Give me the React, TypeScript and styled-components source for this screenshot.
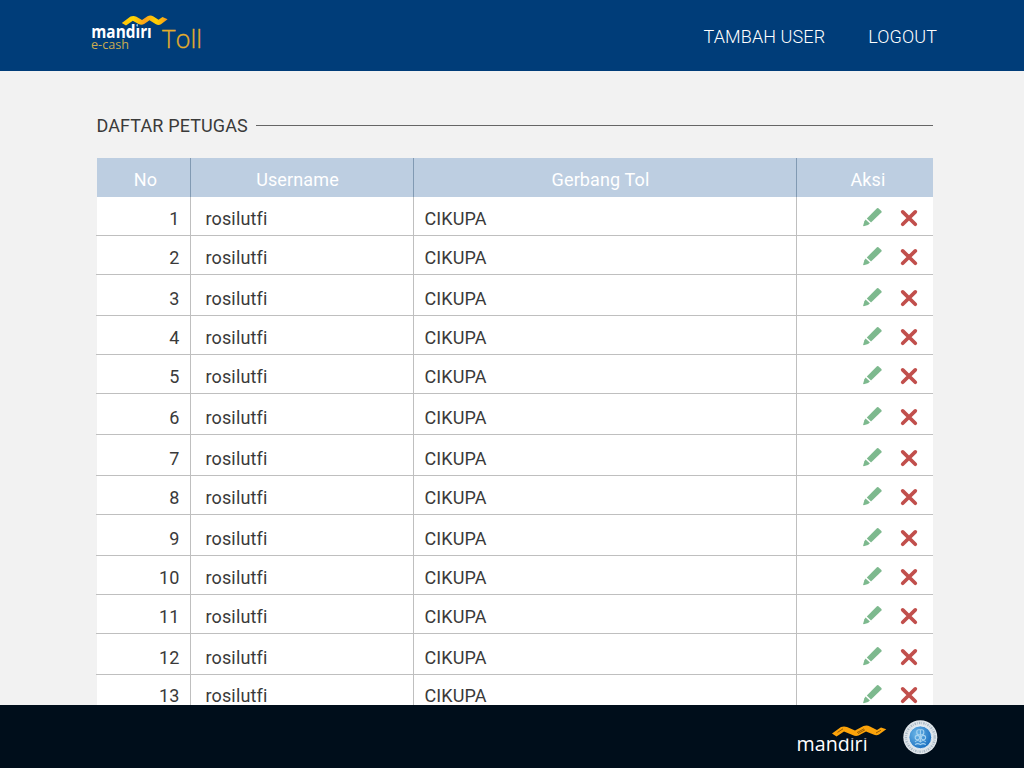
import React from "react";
import styled, { createGlobalStyle } from "styled-components";

const GlobalStyle = createGlobalStyle`
  * { box-sizing: border-box; }
  body { margin: 0; background: #f2f2f2; font-family: Roboto, "Liberation Sans", sans-serif; }
`;

const Page = styled.div`
  display: flex;
  flex-direction: column;
  height: 768px;
  width: 1024px;
  overflow: hidden;
`;

const Header = styled.header`
  flex: 0 0 71px;
  display: flex;
  justify-content: space-between;
  background: #003d79;
  padding: 0 87px 0 88px;
`;

const Nav = styled.nav`
  display: flex;
  gap: 43px;
  padding-top: 26px;
`;

const NavLink = styled.a`
  color: #fff;
  font-size: 18px;
  font-weight: 300;
  letter-spacing: 0.1px;
  line-height: 22px;
`;

const Main = styled.main`
  flex: 1 1 0;
  min-height: 0;
  overflow: hidden;
  padding: 44px 91px 0 96px;
`;

const TitleRow = styled.div`
  display: flex;
  align-items: center;
  gap: 8px;
  height: 22px;
  margin-bottom: 21px;
  padding-left: 0.4px;
  &::after {
    content: "";
    flex: 1;
    height: 1px;
    margin-bottom: 1px;
    background: #666;
  }
`;

const Title = styled.h1`
  margin: 0;
  color: #3a3a3a;
  font-size: 18px;
  font-weight: 400;
  letter-spacing: 0.13px;
  line-height: 22px;
`;

const Grid = styled.div`
  display: grid;
  grid-template-columns: 93px 223px 383px 137px;
  margin-left: 1px;
`;

const HeadRow = styled(Grid)`
  height: 39px;
  background: #bdcee1;
`;

const HeadCell = styled.div`
  padding: 11px 0 0 4px;
  text-align: center;
  color: #fff;
  font-size: 18px;
  letter-spacing: 0.12px;
  line-height: 22px;
  & + & { border-left: 1px solid #819ab3; padding-left: 0; }
  &:nth-child(2) { padding-right: 9px; }
  &:nth-child(3) { padding-right: 9px; }
  &:nth-child(4) { padding-left: 6px; }
`;

const RowLine = styled.div`
  border-bottom: 1px solid #bfbfbf;
`;

const Row = styled(Grid)<{ $height: number }>`
  height: ${(p) => p.$height - 1}px;
  background: #fff;
`;

const Cell = styled.div<{ $align?: "end" }>`
  display: flex;
  align-items: flex-end;
  justify-content: ${(p) => (p.$align === "end" ? "flex-end" : "flex-start")};
  padding: 0 10.6px 5px 10.5px;
  color: #3a3a3a;
  font-size: 18px;
  font-weight: 400;
  font-variant-ligatures: none;
  letter-spacing: 0.1px;
  line-height: 22px;
  & + & { border-left: 1px solid #bfbfbf; }
`;

const NameCell = styled(Cell)`
  padding-left: 14.4px;
  letter-spacing: 0.16px;
`;

const ActionCell = styled(Cell)`
  gap: 18px;
  padding: 0 16px 8px 0;
`;

const Icon = styled.svg`
  display: block;
  width: 20px;
  height: 20px;
`;

const CrossIcon = styled(Icon)`
  width: 17px;
  height: 18px;
  overflow: visible;
`;

const Footer = styled.footer`
  flex: 0 0 63px;
  display: flex;
  justify-content: flex-end;
  align-items: flex-start;
  background: #000e1b;
  padding: 15px 86px 0 0;
  gap: 15px;
`;

function HeaderLogo() {
  return (
    <svg width="120" height="71" viewBox="88 0 120 71">
      <defs>
        <linearGradient id="gold" x1="0" y1="0" x2="1" y2="0">
          <stop offset="0" stopColor="#ffc20e" />
          <stop offset="0.25" stopColor="#ffd600" />
          <stop offset="0.5" stopColor="#f9a01b" />
          <stop offset="0.75" stopColor="#ffd200" />
          <stop offset="1" stopColor="#f7941d" />
        </linearGradient>
        <clipPath id="header-word">
          <path d="M88 20 H137.6 V27.4 H160 V42 H88 Z" />
        </clipPath>
      </defs>
      <text clipPath="url(#header-word)" x="91.3" y="37.5" fontFamily="Open Sans" fontWeight="700" fontSize="17.5" fill="#fff" textLength="60.5" lengthAdjust="spacingAndGlyphs">mandiri</text>
      <path d="M121.8 23 L130.5 16.6 Q133.5 15.2 136.5 16.8 L142 20 L147.5 16.2 Q150.5 14.6 153.5 16.4 L158.5 19.8 L162.5 17 L167.6 19.2 L161 24.3 Q158.5 25.6 155.5 24 L149.5 20.2 L144.5 23.8 Q141.5 25.6 138.5 24 L132.8 20.8 L126 25.4 Z" fill="url(#gold)" />
      <text x="91" y="49.2" fontFamily="Open Sans" fontSize="13" fill="#c9ab50" textLength="38" lengthAdjust="spacingAndGlyphs">e-cash</text>
      <text x="162" y="47.8" fontFamily="Open Sans" fontWeight="300" fontSize="26.5" fill="#e5ae2b" stroke="#e5ae2b" strokeWidth="0.3" textLength="40" lengthAdjust="spacingAndGlyphs">Toll</text>
    </svg>
  );
}

function FooterLogo() {
  return (
    <svg width="91" height="36" viewBox="797 720 91 36">
      <defs>
        <clipPath id="footer-word">
          <path d="M796 730 H844.9 V738.6 H872 V756 H796 Z" />
        </clipPath>
      </defs>
      <text clipPath="url(#footer-word)" x="796.6" y="750.7" fontFamily="Open Sans" fontWeight="500" fontSize="20.5" fill="#fff" textLength="71" lengthAdjust="spacingAndGlyphs">mandiri</text>
      <path d="M832 733.6 L841 727 Q844 725.8 847 727 L855 730.6 L863.5 726 Q867 724.8 870 726.4 L877 730 L881 727.6 L886.3 729.2 L879 734.6 Q876.5 736 873.5 734.6 L866 731.4 L858.5 735.6 Q855.5 736.6 852.5 735 L844 731.6 L836.5 736.4 Z" fill="#fba30a" />
      <path d="M837.5 732.4 l5.5 -3.6 M857 732.6 l7 -3.8 M858 733.6 l7 -3.8 M876 733 l5 -2.8" stroke="#7a4a05" strokeWidth="0.8" fill="none" />
    </svg>
  );
}

function Seal() {
  return (
    <svg width="35" height="35" viewBox="0 0 35 35">
      <defs>
        <radialGradient id="seal" cx="0.35" cy="0.35" r="0.75">
          <stop offset="0" stopColor="#6bb6e8" />
          <stop offset="1" stopColor="#166bbd" />
        </radialGradient>
      </defs>
      <circle cx="17.3" cy="17.3" r="17" fill="#dfe5ea" />
      <circle cx="17.3" cy="17.3" r="14.4" fill="none" stroke="#a9b9c6" strokeWidth="2.4" strokeDasharray="1.4 1.1 0.7 1.2" />
      <circle cx="17.3" cy="17.3" r="11.4" fill="url(#seal)" stroke="#f2f7fb" strokeWidth="0.8" />
      <g fill="none" stroke="#a5d2f0" strokeWidth="1.1">
        <rect x="13.8" y="9.8" width="7" height="5" rx="2" />
        <circle cx="14.4" cy="17.6" r="2.2" />
        <circle cx="20.4" cy="17.6" r="2.2" />
        <path d="M17.4 10 V22 M12 22 q2.7 -3 5.4 0 q2.7 -3 5.4 0 M12 24.6 q2.7 -2 5.4 0 q2.7 -2 5.4 0" />
      </g>
    </svg>
  );
}

function Pencil() {
  return (
    <Icon viewBox="0 0 20 20">
      <g fill="#7db98e" transform="translate(0.4 0.4)">
        <path d="M14.6 0.8 Q15.3 0.2 16 0.8 L19 3.7 Q19.6 4.5 19 5.2 L8.6 15.2 L4.4 11 Z" />
        <path d="M3.2 12.1 L7.5 16.2 L5.6 17.6 L1.2 18.9 L0.7 18.3 L2 13.8 Z" />
      </g>
    </Icon>
  );
}

function Cross() {
  return (
    <CrossIcon viewBox="0 0 17 18">
      <path d="M2.7 2.9 L15.3 15.3 M15.3 2.9 L2.7 15.3" stroke="#c14f4c" strokeWidth="3.7" strokeLinecap="round" />
    </CrossIcon>
  );
}

const rowHeights = [39, 39, 41, 39, 39, 41, 41, 39, 41, 39, 39, 41, 38];

export default function App() {
  return (
    <Page>
      <GlobalStyle />
      <Header>
        <HeaderLogo />
        <Nav>
          <NavLink>TAMBAH USER</NavLink>
          <NavLink>LOGOUT</NavLink>
        </Nav>
      </Header>
      <Main>
        <TitleRow>
          <Title>DAFTAR PETUGAS</Title>
        </TitleRow>
        <HeadRow>
          <HeadCell>No</HeadCell>
          <HeadCell>Username</HeadCell>
          <HeadCell>Gerbang Tol</HeadCell>
          <HeadCell>Aksi</HeadCell>
        </HeadRow>
        {rowHeights.map((height, i) => (
          <RowLine key={i}>
            <Row $height={height}>
              <Cell $align="end">{i + 1}</Cell>
              <NameCell>rosilutfi</NameCell>
              <Cell>CIKUPA</Cell>
              <ActionCell $align="end">
                <Pencil />
                <Cross />
              </ActionCell>
            </Row>
          </RowLine>
        ))}
      </Main>
      <Footer>
        <FooterLogo />
        <Seal />
      </Footer>
    </Page>
  );
}
